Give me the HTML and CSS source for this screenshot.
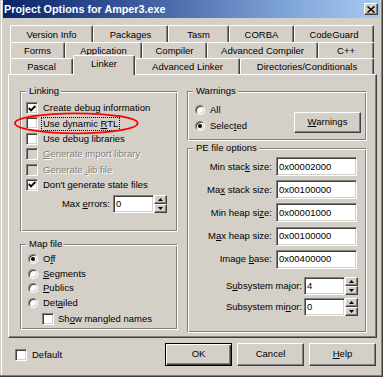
FILE: index.html
```html
<!DOCTYPE html>
<html>
<head>
<meta charset="utf-8">
<title>Project Options</title>
<link rel="stylesheet" href="styles.css">
</head>
<body>
<div class="dlg">
  <div class="title">
    <span class="title-text">Project Options for Amper3.exe</span>
    <span class="cap-btn"><svg width="8" height="7" viewBox="0 0 8 7"><path d="M0.5 0.5 L7.5 6.5 M7.5 0.5 L0.5 6.5" stroke="#000" stroke-width="1.5" fill="none"/></svg></span>
  </div>

  <div class="tabs">
    <div class="tabrow r1">
      <div class="tab">Version Info</div>
      <div class="tab">Packages</div>
      <div class="tab">Tasm</div>
      <div class="tab">CORBA</div>
      <div class="tab">CodeGuard</div>
    </div>
    <div class="tabrow r2">
      <div class="tab">Forms</div>
      <div class="tab">Application</div>
      <div class="tab">Compiler</div>
      <div class="tab">Advanced Compiler</div>
      <div class="tab">C++</div>
    </div>
    <div class="tabrow r3">
      <div class="tab">Pascal</div>
      <div class="tab sel">Linker</div>
      <div class="tab">Advanced Linker</div>
      <div class="tab">Directories/Conditionals</div>
    </div>
  </div>

  <div class="page">
    <div class="col">
      <div class="grp linking">
        <span class="grp-label">Linking</span>
        <div class="chkrow"><span class="chk"><svg class="tick" width="8" height="7" viewBox="0 0 8 7"><polyline points="0.8,3 3,5.3 7.3,1" fill="none" stroke="#000" stroke-width="1.9"/></svg></span><span>Create debug information</span></div>
        <div class="chkrow"><span class="chk"></span><span class="focus">Use dynamic <u>R</u>TL</span></div>
        <div class="chkrow"><span class="chk"></span><span>Use debug libraries</span></div>
        <div class="chkrow"><span class="chk dis"></span><span class="dis-text"><u>G</u>enerate import library</span></div>
        <div class="chkrow"><span class="chk dis"></span><span class="dis-text">Generate <u>.</u>lib file</span></div>
        <div class="chkrow"><span class="chk"><svg class="tick" width="8" height="7" viewBox="0 0 8 7"><polyline points="0.8,3 3,5.3 7.3,1" fill="none" stroke="#000" stroke-width="1.9"/></svg></span><span>Don't <u>g</u>enerate state files</span></div>
        <div class="maxrow">
          <span class="lbl">Max <u>e</u>rrors:</span>
          <span class="edit small">0</span>
          <span class="spin"><span class="sb"><svg width="5" height="3" viewBox="0 0 5 3"><path d="M0 3H5L2.5 0Z"/></svg></span><span class="sb"><svg width="5" height="3" viewBox="0 0 5 3"><path d="M0 0H5L2.5 3Z"/></svg></span></span>
        </div>
        <svg class="ring" width="127" height="25" viewBox="0 0 127 25"><ellipse cx="63.3" cy="12.3" rx="61.3" ry="10" fill="none" stroke="#ff0000" stroke-width="1.8"/></svg>
      </div>

      <div class="grp mapfile">
        <span class="grp-label">Map file</span>
        <div class="radrow"><span class="rad on"></span><span class="rtxt">O<u>f</u>f</span></div>
        <div class="radrow"><span class="rad"></span><span class="rtxt"><u>S</u>egments</span></div>
        <div class="radrow"><span class="rad"></span><span class="rtxt"><u>P</u>ublics</span></div>
        <div class="radrow"><span class="rad"></span><span class="rtxt">Det<u>a</u>iled</span></div>
        <div class="chkrow mangled"><span class="chk"></span><span>Sh<u>o</u>w mangled names</span></div>
      </div>
    </div>

    <div class="col gap7">
      <div class="grp warn">
        <span class="grp-label">Warnings</span>
        <div class="radcol">
          <div class="radrow r16"><span class="rad"></span><span class="rtxt">All</span></div>
          <div class="radrow r16"><span class="rad on"></span><span class="rtxt">Selec<u>t</u>ed</span></div>
        </div>
        <div class="btn wbtn"><span><u>W</u>arnings</span></div>
      </div>

      <div class="grp pe">
        <span class="grp-label">PE file options</span>
        <div class="perow"><span class="lbl">Min stac<u>k</u> size:</span><span class="edit wide">0x00002000</span></div>
        <div class="perow"><span class="lbl">Ma<u>x</u> stack size:</span><span class="edit wide">0x00100000</span></div>
        <div class="perow"><span class="lbl">Min heap si<u>z</u>e:</span><span class="edit wide">0x00001000</span></div>
        <div class="perow"><span class="lbl">M<u>a</u>x heap size:</span><span class="edit wide">0x00100000</span></div>
        <div class="perow"><span class="lbl">Image <u>b</u>ase:</span><span class="edit wide">0x00400000</span></div>
        <div class="subrow first"><span class="lbl">S<u>u</u>bsystem major:</span><span class="edit small">4</span>
          <span class="spin"><span class="sb"><svg width="5" height="3" viewBox="0 0 5 3"><path d="M0 3H5L2.5 0Z"/></svg></span><span class="sb"><svg width="5" height="3" viewBox="0 0 5 3"><path d="M0 0H5L2.5 3Z"/></svg></span></span>
        </div>
        <div class="subrow"><span class="lbl">Subsystem mi<u>n</u>or:</span><span class="edit small">0</span>
          <span class="spin"><span class="sb"><svg width="5" height="3" viewBox="0 0 5 3"><path d="M0 3H5L2.5 0Z"/></svg></span><span class="sb"><svg width="5" height="3" viewBox="0 0 5 3"><path d="M0 0H5L2.5 3Z"/></svg></span></span>
        </div>
      </div>
    </div>
  </div>

  <div class="footer">
    <span class="chk"></span><span class="deflbl">Default</span>
    <div class="btns">
      <div class="btn def"><span>OK</span></div>
      <div class="btn"><span>Cancel</span></div>
      <div class="btn"><span><u>H</u>elp</span></div>
    </div>
  </div>
</div>
</body>
</html>
```

FILE: styles.css
```css
* { box-sizing: border-box; }
html, body { margin: 0; padding: 0; }
body {
  width: 383px;
  height: 377px;
  overflow: hidden;
  background: #D4D0C8;
  font-family: "Liberation Sans", Arial, sans-serif;
  font-size: 9.5px;
  line-height: 12px;
  color: #000;
}
u { text-decoration: underline; text-underline-offset: 1px; }

.dlg {
  width: 383px;
  height: 377px;
  background: #D4D0C8;
  box-shadow: inset -1px -1px 0 #404040, inset -2px -2px 0 #808080, inset 1px 1px 0 #D4D0C8, inset 2px 2px 0 #fff;
  display: flex;
  flex-direction: column;
}

/* title bar */
.title {
  margin: 0 3px;
  height: 18px;
  flex: none;
  background: linear-gradient(to right, #0A246A 0%, #3A5A9C 35%, #7FA4D8 75%, #A6CAF0 100%);
  display: flex;
  align-items: center;
  justify-content: space-between;
  padding: 0 2px 0 1px;
}
.title-text {
  color: #fff;
  font-weight: bold;
  font-size: 10.8px;
  line-height: 12px;
  white-space: nowrap;
}
.cap-btn {
  width: 14px;
  height: 12px;
  background: #D4D0C8;
  border: 1px solid;
  border-color: #fff #404040 #404040 #fff;
  box-shadow: inset -1px -1px 0 #808080;
  display: flex;
  align-items: center;
  justify-content: center;
  padding-right: 1px;
}

/* tabs */
.tabs {
  margin: 7px 0 0 10px;
  width: 364px;
  flex: none;
}
.tabrow { display: grid; }
.r1 { grid-template-columns: 83px 75px 61px 65px 80px; height: 17px; }
.r2 { grid-template-columns: 55px 77px 65px 111px 56px; height: 16px; }
.r3 {
  grid-template-columns: 63px 62px 105px 134px;
  height: 21px;
  margin-top: -4px;
  margin-bottom: -1px;
  align-items: end;
}
.tab {
  height: 100%;
  border-top: 1px solid #fff;
  border-left: 1px solid #fff;
  border-right: 1px solid #404040;
  box-shadow: inset -1px 0 0 #808080;
  border-top-left-radius: 2px;
  border-top-right-radius: 2px;
  display: flex;
  align-items: center;
  justify-content: center;
  white-space: nowrap;
  padding-top: 1px;
}
.r3 .tab { height: 16px; margin-bottom: 1px; }
.r3 .tab.sel {
  height: 20px;
  margin-bottom: 0;
  position: relative;
  z-index: 1;
  background: #D4D0C8;
  padding-top: 0;
  padding-bottom: 4px;
}

/* page */
.page {
  margin-left: 8px;
  width: 369px;
  height: 264px;
  flex: none;
  border: 1px solid;
  border-color: #fff #404040 #404040 #fff;
  box-shadow: inset -1px -1px 0 #808080;
  padding: 16px 0 0 11px;
  display: grid;
  grid-template-columns: 158px 180px;
  column-gap: 9px;
  align-items: start;
}
.col { display: flex; flex-direction: column; gap: 12px; }
.col.gap7 { gap: 7px; }

.grp {
  position: relative;
  border: 1px solid;
  border-color: #808080 #fff #fff #808080;
  box-shadow: inset 1px 1px 0 #fff, inset -1px -1px 0 #808080;
}
.grp-label {
  position: absolute;
  top: -7px;
  left: 5px;
  padding: 0 2px 0 3px;
  background: #D4D0C8;
  line-height: 12px;
  white-space: nowrap;
}

.linking { height: 141px; padding: 10px 10px 0 5px; }
.mapfile { height: 86px; padding: 9px 0 0 7px; }
.warn {
  height: 50px;
  padding: 13px 5px 0 7px;
  display: flex;
  justify-content: space-between;
  align-items: flex-start;
}
.pe { height: 185px; padding: 8px 0 0 0; }

/* checkboxes */
.chkrow {
  display: flex;
  align-items: flex-start;
  height: 15.4px;
  white-space: nowrap;
}
.chk {
  width: 12px;
  height: 12px;
  flex: none;
  background: #fff;
  border: 1px solid;
  border-color: #808080 #fff #fff #808080;
  box-shadow: inset 1px 1px 0 #404040, inset -1px -1px 0 #D4D0C8;
  margin-right: 5px;
  display: flex;
  align-items: center;
  justify-content: center;
}
.chk.dis { background: #D4D0C8; }
.tick { display: block; margin-left: 0px; }
.focus {
  border: 1px dotted #000;
  padding: 0 1px;
  margin-left: -2px;
  line-height: 12px;
}
.dis-text { color: #808080; text-shadow: 1px 1px 0 #fff; }

.maxrow {
  display: flex;
  justify-content: flex-end;
  align-items: center;
  height: 18px;
  margin-top: 1px;
}
.maxrow .lbl { margin-right: 3px; }

/* radios */
.radrow {
  display: flex;
  align-items: flex-start;
  height: 14.7px;
  white-space: nowrap;
}
.radrow.r16 { height: 16px; }
.rad {
  width: 10px;
  height: 10px;
  flex: none;
  border-radius: 50%;
  background: #fff;
  border: 1px solid;
  border-color: #808080 #fff #fff #808080;
  box-shadow: inset 1px 1px 0 #404040, inset -1px -1px 0 #D4D0C8;
  margin-right: 5px;
  display: flex;
  align-items: center;
  justify-content: center;
}
.rad.on::after {
  content: "";
  width: 4px;
  height: 4px;
  border-radius: 50%;
  background: #000;
}
.rtxt { margin-top: -1px; }
.mangled { padding-left: 14px; }
.mangled .chk { margin-right: 4px; }

/* edits */
.edit {
  height: 19px;
  background: #fff;
  border: 1px solid;
  border-color: #808080 #fff #fff #808080;
  box-shadow: inset 1px 1px 0 #404040, inset -1px -1px 0 #D4D0C8;
  padding-left: 2px;
  display: flex;
  align-items: center;
  white-space: nowrap;
  flex: none;
}
.edit.wide { width: 81px; }
.edit.small { width: 41px; height: 18px; }

.perow {
  display: flex;
  justify-content: flex-end;
  align-items: center;
  height: 19px;
  margin-bottom: 4.2px;
  padding-right: 9px;
  white-space: nowrap;
}
.perow .lbl { margin-right: 4px; }
.subrow {
  display: flex;
  justify-content: flex-end;
  align-items: center;
  height: 18px;
  margin-top: 3px;
  padding-right: 8px;
  white-space: nowrap;
}
.subrow.first { margin-top: 8px; }
.subrow .lbl { margin-right: 2px; }

.spin {
  width: 13px;
  height: 18px;
  flex: none;
  display: flex;
  flex-direction: column;
}
.sb {
  flex: 1;
  border: 1px solid;
  border-color: #fff #404040 #404040 #fff;
  box-shadow: inset -1px -1px 0 #808080;
  display: flex;
  align-items: center;
  justify-content: center;
  background: #D4D0C8;
}
.sb svg { display: block; }

.ring {
  position: absolute;
  left: -8px;
  top: 19px;
}

/* buttons */
.btn {
  width: 67px;
  height: 23px;
  background: #D4D0C8;
  border: 1px solid;
  border-color: #fff #404040 #404040 #fff;
  box-shadow: inset -1px -1px 0 #808080;
  display: flex;
  align-items: center;
  justify-content: center;
  padding-bottom: 1px;
  white-space: nowrap;
  flex: none;
}
.btn.def {
  border-color: #000;
  box-shadow: inset 1px 1px 0 #fff, inset -1px -1px 0 #404040, inset -2px -2px 0 #808080;
}
.wbtn { height: 21px; margin-top: 7px; }

/* footer */
.footer {
  display: flex;
  align-items: center;
  padding: 5px 7px 0 15px;
}
.footer .chk { margin-right: 5px; }
.btns {
  margin-left: auto;
  display: flex;
  gap: 5px;
}
```
